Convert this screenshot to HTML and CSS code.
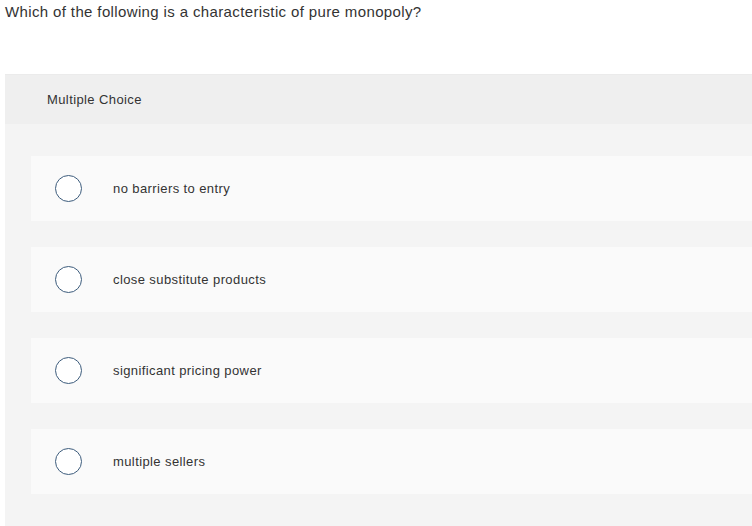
FILE: index.html
```html
<!DOCTYPE html>
<html>
<head>
<meta charset="utf-8">
<link rel="stylesheet" href="styles.css">
</head>
<body>
<div class="question">Which of the following is a characteristic of pure monopoly?</div>
<div class="panel">
  <div class="panel-header">Multiple Choice</div>
  <div class="options">
    <div class="option"><span class="radio"></span><span class="label">no barriers to entry</span></div>
    <div class="option"><span class="radio"></span><span class="label">close substitute products</span></div>
    <div class="option"><span class="radio"></span><span class="label">significant pricing power</span></div>
    <div class="option"><span class="radio"></span><span class="label">multiple sellers</span></div>
  </div>
</div>
</body>
</html>
```
FILE: styles.css
```css
html, body {
  margin: 0;
  padding: 0;
  background: #ffffff;
  overflow: hidden;
}
body {
  font-family: "Liberation Sans", Arial, sans-serif;
  color: #333333;
  width: 752px;
  height: 526px;
}
.question {
  font-size: 15px;
  line-height: 18px;
  letter-spacing: 0.37px;
  padding: 3px 0 0 5px;
  height: 74px;
  box-sizing: border-box;
  color: #333;
}
.panel {
  margin-left: 5px;
  background: #f4f4f4;
  height: 460px;
}
.panel-header {
  height: 50px;
  background: #efefef;
  border-top: 1px solid #ebebeb;
  box-sizing: border-box;
  display: flex;
  align-items: center;
  padding-left: 42px;
  font-size: 13px;
  letter-spacing: 0.4px;
  color: #333;
}
.options {
  display: flex;
  flex-direction: column;
  gap: 26px;
  padding: 32px 0 0 26px;
}
.option {
  height: 65px;
  background: #fafafa;
  display: flex;
  align-items: center;
  padding-left: 24px;
}
.radio {
  width: 25px;
  height: 25px;
  border: 1.5px solid #3d5c7c;
  border-radius: 50%;
  background: #fff;
  flex: none;
}
.label {
  margin-left: 31px;
  font-size: 13px;
  letter-spacing: 0.4px;
  color: #333;
}
```
